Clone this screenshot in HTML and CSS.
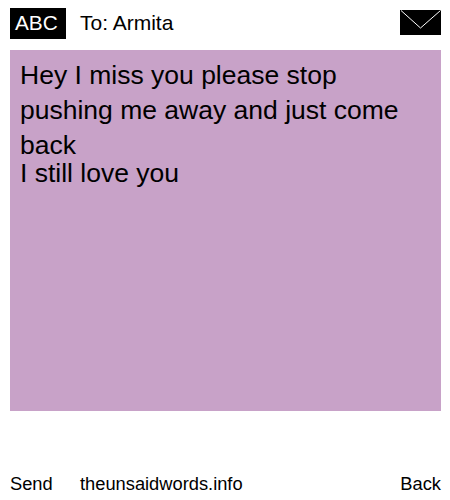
FILE: index.html
```html
<!DOCTYPE html>
<html>
<head>
<meta charset="utf-8">
<title>To: Armita</title>
<link rel="stylesheet" href="styles.css">
</head>
<body>
<header class="top">
  <span class="abc">ABC</span>
  <span class="to">To: Armita</span>
  <svg class="env" viewBox="0 0 41 25" width="41" height="25"><rect width="41" height="25" fill="#000"/><path d="M1 0.5L20.5 18L40.5 0.5" fill="none" stroke="#fff" stroke-width="1"/></svg>
</header>
<main class="msg">
  <p class="line wrapped">Hey I miss you please stop pushing me away and just come back</p>
  <p class="line last">I still love you</p>
</main>
<footer class="bottom">
  <span class="send">Send</span>
  <span class="site">theunsaidwords.info</span>
  <span class="back">Back</span>
</footer>
</body>
</html>
```
FILE: styles.css
```css
html,body{margin:0;padding:0;}
body{width:450px;height:500px;background:#fff;color:#000;font-family:"Liberation Sans",Arial,sans-serif;overflow:hidden;}
.top{display:flex;align-items:flex-start;width:431px;height:31px;margin:8px 0 11px 10px;}
.abc{background:#000;color:#fff;width:56px;height:31px;box-sizing:border-box;padding-left:5px;line-height:29px;font-size:20.8px;}
.to{margin-left:14px;font-size:21px;line-height:29px;flex:1;}
.env{display:block;margin-top:2px;}
.msg{margin-left:10px;width:431px;height:361px;background:#c8a2c8;padding:8px 24px 0 10px;box-sizing:border-box;font-size:26.5px;}
.line{margin:0;}
.wrapped{line-height:35px;}
.last{line-height:27px;margin-top:-3px;}
.bottom{display:flex;width:431px;margin:62px 0 0 10px;font-size:18.3px;line-height:22px;}
.send{width:70px;}
.site{flex:1;}
```
